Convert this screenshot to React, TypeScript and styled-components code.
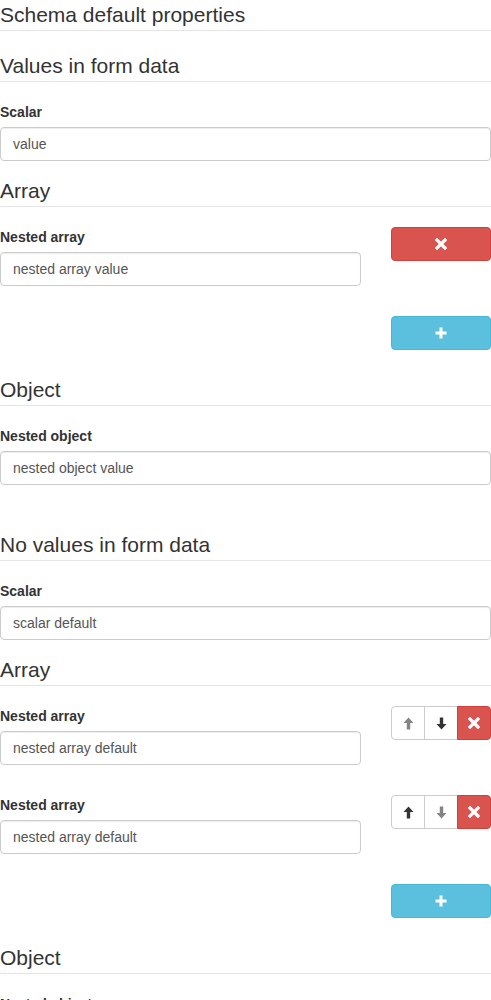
import React from "react";
import styled, { createGlobalStyle } from "styled-components";

const GlobalStyle = createGlobalStyle`
  html, body { margin: 0; padding: 0; background: #fff; }
  body {
    font-family: "Liberation Sans", Arial, Helvetica, sans-serif;
    font-size: 14px;
    line-height: 1.42857143;
    color: #333;
    overflow-x: hidden;
  }
  * { box-sizing: border-box; }
`;

const Page = styled.div`
  width: 491px;
`;

const Fieldset = styled.fieldset`
  border: 0;
  margin: 0;
  padding: 0;
  min-width: 0;
`;

const Legend = styled.legend`
  display: block;
  width: 100%;
  padding: 0;
  margin: 0 0 20px 0;
  font-size: 21px;
  line-height: 30px;
  color: #333;
  border: 0;
  border-bottom: 1px solid #e5e5e5;
`;

const FormGroup = styled.div`
  margin-bottom: 15px;
`;

const Label = styled.label`
  display: inline-block;
  max-width: 100%;
  margin-bottom: 5px;
  font-weight: 700;
  font-size: 14px;
  line-height: 20px;
`;

const Input = styled.input`
  display: block;
  width: 100%;
  height: 34px;
  padding: 6px 12px;
  font-family: inherit;
  font-size: 14px;
  line-height: 20px;
  color: #555;
  background: #fff;
  border: 1px solid #ccc;
  border-radius: 4px;
  box-shadow: inset 0 1px 1px rgba(0, 0, 0, 0.075);
  outline: none;
`;

const ArrayItem = styled.div`
  display: grid;
  grid-template-columns: 1fr 100px;
  column-gap: 30px;
  margin-bottom: 15px;
`;

const Toolbox = styled.div`
  display: flex;
  align-items: flex-start;
`;

const BtnGroup = styled.div`
  display: flex;
  width: 100%;
`;

type Variant = "danger" | "info" | "default";

const colors: Record<Variant, { bg: string; border: string; fg: string }> = {
  danger: { bg: "#d9534f", border: "#d43f3a", fg: "#fff" },
  info: { bg: "#5bc0de", border: "#46b8da", fg: "#fff" },
  default: { bg: "#fff", border: "#ccc", fg: "#333" },
};

const Button = styled.button<{ $variant: Variant; $pos?: "first" | "mid" | "last" | "only" }>`
  flex: 1 1 0;
  height: 34px;
  padding: 0;
  margin: 0;
  margin-left: ${(p) => (p.$pos === "mid" || p.$pos === "last" ? "-1px" : "0")};
  display: flex;
  align-items: center;
  justify-content: center;
  background: ${(p) => colors[p.$variant].bg};
  border: 1px solid ${(p) => colors[p.$variant].border};
  color: ${(p) => colors[p.$variant].fg};
  border-radius: ${(p) =>
    p.$pos === "first"
      ? "4px 0 0 4px"
      : p.$pos === "mid"
      ? "0"
      : p.$pos === "last"
      ? "0 4px 4px 0"
      : "4px"};
  cursor: pointer;
  &:disabled {
    cursor: not-allowed;
  }
  &:disabled > svg {
    opacity: 0.6;
  }
`;

const AddRow = styled.p`
  margin: 0 0 10px 0;
  display: flex;
  justify-content: flex-end;
`;

const AddButton = styled(Button)`
  flex: 0 0 100px;
  width: 100px;
`;

const RemoveIcon = () => (
  <svg width="12" height="12" viewBox="0 0 12 12">
    <path d="M2 2 L10 10 M10 2 L2 10" stroke="currentColor" strokeWidth="3.2" strokeLinecap="square" fill="none" />
  </svg>
);

const PlusIcon = () => (
  <svg width="12" height="12" viewBox="0 0 12 12">
    <path d="M4.5 0.5 H7.5 V4.5 H11.5 V7.5 H7.5 V11.5 H4.5 V7.5 H0.5 V4.5 H4.5 Z" fill="currentColor" />
  </svg>
);

const ArrowUpIcon = () => (
  <svg width="11" height="13" viewBox="0 0 11 13">
    <path d="M5.5 0.5 L10.5 6 L7.2 6 L7.2 12.5 L3.8 12.5 L3.8 6 L0.5 6 Z" fill="currentColor" />
  </svg>
);

const ArrowDownIcon = () => (
  <svg width="11" height="13" viewBox="0 0 11 13">
    <path d="M5.5 12.5 L10.5 7 L7.2 7 L7.2 0.5 L3.8 0.5 L3.8 7 L0.5 7 Z" fill="currentColor" />
  </svg>
);

const TextField = ({ label, value }: { label: string; value: string }) => (
  <FormGroup>
    <Label>{label}</Label>
    <Input defaultValue={value} />
  </FormGroup>
);

const AddBar = () => (
  <AddRow>
    <AddButton $variant="info" $pos="only" type="button">
      <PlusIcon />
    </AddButton>
  </AddRow>
);

export default function App() {
  return (
    <Page>
      <GlobalStyle />
      <Fieldset>
        <Legend>Schema default properties</Legend>

        <FormGroup>
          <Fieldset>
            <Legend>Values in form data</Legend>
            <TextField label="Scalar" value="value" />
            <FormGroup>
              <Fieldset>
                <Legend>Array</Legend>
                <ArrayItem>
                  <TextField label="Nested array" value="nested array value" />
                  <Toolbox>
                    <BtnGroup>
                      <Button $variant="danger" $pos="only" type="button">
                        <RemoveIcon />
                      </Button>
                    </BtnGroup>
                  </Toolbox>
                </ArrayItem>
                <AddBar />
              </Fieldset>
            </FormGroup>
            <FormGroup>
              <Fieldset>
                <Legend>Object</Legend>
                <TextField label="Nested object" value="nested object value" />
              </Fieldset>
            </FormGroup>
          </Fieldset>
        </FormGroup>

        <FormGroup>
          <Fieldset>
            <Legend>No values in form data</Legend>
            <TextField label="Scalar" value="scalar default" />
            <FormGroup>
              <Fieldset>
                <Legend>Array</Legend>
                <ArrayItem>
                  <TextField label="Nested array" value="nested array default" />
                  <Toolbox>
                    <BtnGroup>
                      <Button $variant="default" $pos="first" type="button" disabled>
                        <ArrowUpIcon />
                      </Button>
                      <Button $variant="default" $pos="mid" type="button">
                        <ArrowDownIcon />
                      </Button>
                      <Button $variant="danger" $pos="last" type="button">
                        <RemoveIcon />
                      </Button>
                    </BtnGroup>
                  </Toolbox>
                </ArrayItem>
                <ArrayItem>
                  <TextField label="Nested array" value="nested array default" />
                  <Toolbox>
                    <BtnGroup>
                      <Button $variant="default" $pos="first" type="button">
                        <ArrowUpIcon />
                      </Button>
                      <Button $variant="default" $pos="mid" type="button" disabled>
                        <ArrowDownIcon />
                      </Button>
                      <Button $variant="danger" $pos="last" type="button">
                        <RemoveIcon />
                      </Button>
                    </BtnGroup>
                  </Toolbox>
                </ArrayItem>
                <AddBar />
              </Fieldset>
            </FormGroup>
            <FormGroup>
              <Fieldset>
                <Legend>Object</Legend>
                <TextField label="Nested object" value="nested object default" />
              </Fieldset>
            </FormGroup>
          </Fieldset>
        </FormGroup>
      </Fieldset>
    </Page>
  );
}
